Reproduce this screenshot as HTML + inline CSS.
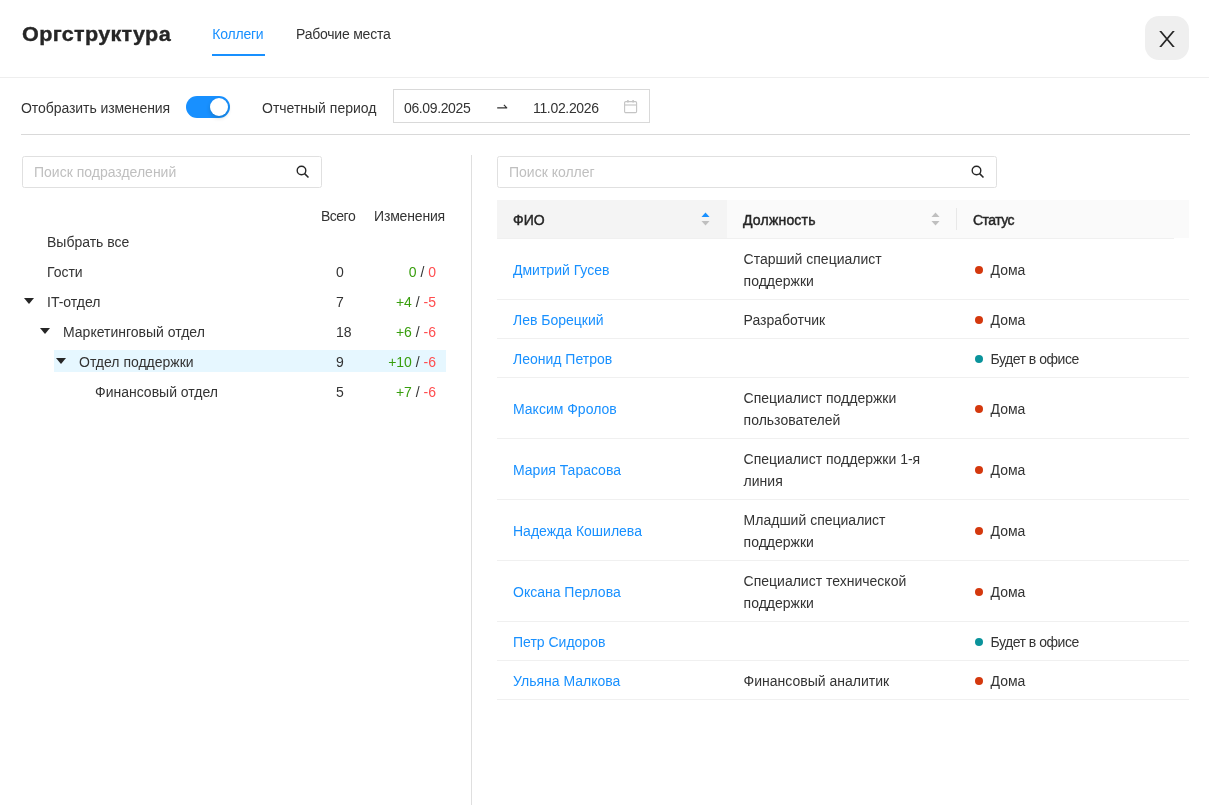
<!DOCTYPE html>
<html lang="ru">
<head>
<meta charset="utf-8">
<title>Оргструктура</title>
<style>
*{box-sizing:border-box;margin:0;padding:0}
html,body{width:1209px;height:805px;overflow:hidden;background:#fff}
body{font-family:"Liberation Sans",sans-serif;font-size:14px;color:#333;position:relative}
.abs{position:absolute;white-space:nowrap}
.t{line-height:22px}
#title{left:22.3px;top:19px;font-size:20px;line-height:30px;font-weight:bold;color:#262626;letter-spacing:0.3px;transform:scaleX(1.08);transform-origin:0 0;-webkit-text-stroke:0.35px #262626}
.tab{top:23px;letter-spacing:-0.22px}
#tab1{left:212.3px;color:#1890ff}
#tab1u{left:212px;top:54px;width:53px;height:2px;background:#1890ff}
#tab2{left:296px;color:#333}
#close{left:1145px;top:16px;width:44px;height:44px;border-radius:14px;background:#efefef}
#hline{left:0;top:77px;width:1209px;height:1px;background:#eeeeee}
#lbl1{left:21px;top:96.7px}
#toggle{left:185.5px;top:96.4px;width:44px;height:22px;border-radius:11px;background:#1890ff}
#knob{position:absolute;left:24px;top:2px;width:18px;height:18px;border-radius:50%;background:#fff;box-shadow:0 2px 4px rgba(0,35,11,.2)}
#lbl2{left:262px;top:96.7px}
#dates{left:392.5px;top:89px;width:257px;height:34px;border:1px solid #d9d9d9;border-radius:0}
#d1{left:404px;top:96.7px;letter-spacing:-0.37px}
#arr{left:496px;top:96px}
#d2{left:533px;top:96.7px;letter-spacing:-0.33px}
#line2{left:21px;top:134px;width:1169px;height:1px;background:#d9d9d9}
.search{height:32px;border:1px solid #e0e0e0;border-radius:2.5px;top:155.5px}
#s1{left:22px;width:300px}
#s2{left:497px;width:500px}
.ph{top:161px;color:#bfbfbf}
#vdiv{left:471px;top:155px;width:1px;height:650px;background:#dfdfdf}
.num{top:231px}
.green{color:#389e0d}
.red{color:#ff4d4f}
#hl{left:54px;top:350px;width:392px;height:22px;background:#e6f7ff}
.tri{width:0;height:0;border-left:5px solid transparent;border-right:5px solid transparent;border-top:6px solid #262626}
/* table */
#thead{left:497px;top:200px;width:692px;height:38px;background:#fafafa}
#thsort{left:497px;top:200px;width:230px;height:38px;background:#f4f4f4}
#thline{left:497px;top:238px;width:677px;height:1px;background:#f0f0f0}
.th{top:208.5px;font-weight:normal;color:#262626;-webkit-text-stroke:0.45px #262626}
.rowline{left:497px;width:692px;height:1px;background:#f0f0f0}
.name{color:#1890ff}
.dot{width:8px;height:8px;border-radius:50%}
.dh{background:#d4380d}
.do{background:#0a939b}
</style>
</head>
<body><div style="position:absolute;left:0;top:0;width:1209px;height:805px;will-change:transform">
<div id="title" class="abs">Оргструктура</div>
<div id="tab1" class="abs t tab">Коллеги</div>
<div id="tab1u" class="abs"></div>
<div id="tab2" class="abs t tab">Рабочие места</div>
<div id="close" class="abs">
  <svg width="44" height="44" viewBox="0 0 44 44" style="position:absolute;left:0;top:0"><path d="M14.2 15H16.4L29.8 31H27.6Z M27.6 15H29.8L16.4 31H14.2Z" fill="#262626"/></svg>
</div>
<div id="hline" class="abs"></div>

<div id="lbl1" class="abs t" style="letter-spacing:-0.07px">Отобразить изменения</div>
<div id="toggle" class="abs"><div id="knob"></div></div>
<div id="lbl2" class="abs t">Отчетный период</div>
<div id="dates" class="abs"></div>
<div id="d1" class="abs t">06.09.2025</div>
<svg class="abs" style="left:496px;top:103px" width="13" height="7" viewBox="0 0 13 7"><path d="M1.2 4.8H10.8L7.9 1.9" stroke="#333" stroke-width="1.2" fill="none" stroke-linejoin="round"/></svg>
<div id="d2" class="abs t">11.02.2026</div>
<svg class="abs" style="left:624px;top:100px" width="14" height="14" viewBox="0 0 14 14"><rect x="0.6" y="1.6" width="12" height="11" rx="1.2" fill="none" stroke="#c4c4c4" stroke-width="1.1"/><path d="M0.6 5H12.6" stroke="#c4c4c4" stroke-width="1.1" fill="none"/><path d="M3.9 0V2.6 M9.1 0V2.6" stroke="#c4c4c4" stroke-width="1.5" fill="none"/></svg>
<div id="line2" class="abs"></div>

<!-- left -->
<div id="s1" class="abs search"></div>
<div class="abs t ph" style="left:34px">Поиск подразделений</div>
<svg class="abs" style="left:296px;top:164.6px" width="14" height="14" viewBox="0 0 14 14"><circle cx="5.5" cy="5.5" r="4.3" fill="none" stroke="#262626" stroke-width="1.4"/><path d="M8.6 8.6L12.5 12.5" stroke="#262626" stroke-width="1.5"/></svg>
<div id="vdiv" class="abs"></div>

<div class="abs t" style="left:321px;top:205px;letter-spacing:-0.5px">Всего</div>
<div class="abs t" style="left:374px;top:205px;letter-spacing:-0.17px">Изменения</div>
<div id="hl" class="abs"></div>

<div class="abs t" style="left:47px;top:231px">Выбрать все</div>
<div class="abs t" style="left:47px;top:261px">Гости</div>
<div class="abs t" style="left:336px;top:261px">0</div>
<div class="abs t" style="right:773px;top:261px"><span class="green">0</span> / <span class="red">0</span></div>

<div class="abs tri" style="left:24px;top:298px"></div>
<div class="abs t" style="left:47px;top:291px">IT-отдел</div>
<div class="abs t" style="left:336px;top:291px">7</div>
<div class="abs t" style="right:773px;top:291px"><span class="green">+4</span> / <span class="red">-5</span></div>

<div class="abs tri" style="left:40px;top:328px"></div>
<div class="abs t" style="left:63px;top:321px">Маркетинговый отдел</div>
<div class="abs t" style="left:336px;top:321px">18</div>
<div class="abs t" style="right:773px;top:321px"><span class="green">+6</span> / <span class="red">-6</span></div>

<div class="abs tri" style="left:56px;top:358px"></div>
<div class="abs t" style="left:79px;top:351px">Отдел поддержки</div>
<div class="abs t" style="left:336px;top:351px">9</div>
<div class="abs t" style="right:773px;top:351px"><span class="green">+10</span> / <span class="red">-6</span></div>

<div class="abs t" style="left:95px;top:381px">Финансовый отдел</div>
<div class="abs t" style="left:336px;top:381px">5</div>
<div class="abs t" style="right:773px;top:381px"><span class="green">+7</span> / <span class="red">-6</span></div>

<!-- right -->
<div id="s2" class="abs search"></div>
<div class="abs t ph" style="left:509px">Поиск коллег</div>
<svg class="abs" style="left:971px;top:164.6px" width="14" height="14" viewBox="0 0 14 14"><circle cx="5.5" cy="5.5" r="4.3" fill="none" stroke="#262626" stroke-width="1.4"/><path d="M8.6 8.6L12.5 12.5" stroke="#262626" stroke-width="1.5"/></svg>

<div id="thead" class="abs"></div>
<div id="thsort" class="abs"></div>
<div id="thline" class="abs"></div>
<div class="abs t th" style="left:513px;letter-spacing:0px">ФИО</div>
<div class="abs t th" style="left:743px;letter-spacing:0.2px">Должность</div>
<div class="abs t th" style="left:973px;letter-spacing:-0.55px">Статус</div>
<div class="abs" style="left:956px;top:208px;width:1px;height:22px;background:#e8e8e8"></div>
<svg class="abs" style="left:701px;top:212.4px" width="9" height="14" viewBox="0 0 9 14"><path d="M4.5 0.5L8.5 5H0.5Z" fill="#1890ff"/><path d="M4.5 13.5L8.5 9H0.5Z" fill="#bfbfbf"/></svg>
<svg class="abs" style="left:931px;top:212.4px" width="9" height="14" viewBox="0 0 9 14"><path d="M4.5 0.5L8.5 5H0.5Z" fill="#bfbfbf"/><path d="M4.5 13.5L8.5 9H0.5Z" fill="#bfbfbf"/></svg>

<div id="rows">
<div class="abs t name" style="left:513px;top:259px">Дмитрий Гусев</div>
<div class="abs t" style="left:743.6px;top:248px">Старший специалист</div>
<div class="abs t" style="left:743.6px;top:270px">поддержки</div>
<div class="abs dot dh" style="left:974.5px;top:266px"></div>
<div class="abs t" style="left:990.5px;top:259px">Дома</div>
<div class="abs rowline" style="top:299px"></div>
<div class="abs t name" style="left:513px;top:309px">Лев Борецкий</div>
<div class="abs t" style="left:743.6px;top:309px">Разработчик</div>
<div class="abs dot dh" style="left:974.5px;top:316px"></div>
<div class="abs t" style="left:990.5px;top:309px">Дома</div>
<div class="abs rowline" style="top:338px"></div>
<div class="abs t name" style="left:513px;top:348px">Леонид Петров</div>
<div class="abs dot do" style="left:974.5px;top:355px"></div>
<div class="abs t" style="left:990.5px;top:348px;letter-spacing:-0.48px">Будет в офисе</div>
<div class="abs rowline" style="top:377px"></div>
<div class="abs t name" style="left:513px;top:398px">Максим Фролов</div>
<div class="abs t" style="left:743.6px;top:387px">Специалист поддержки</div>
<div class="abs t" style="left:743.6px;top:409px">пользователей</div>
<div class="abs dot dh" style="left:974.5px;top:405px"></div>
<div class="abs t" style="left:990.5px;top:398px">Дома</div>
<div class="abs rowline" style="top:438px"></div>
<div class="abs t name" style="left:513px;top:459px">Мария Тарасова</div>
<div class="abs t" style="left:743.6px;top:448px">Специалист поддержки 1-я</div>
<div class="abs t" style="left:743.6px;top:470px">линия</div>
<div class="abs dot dh" style="left:974.5px;top:466px"></div>
<div class="abs t" style="left:990.5px;top:459px">Дома</div>
<div class="abs rowline" style="top:499px"></div>
<div class="abs t name" style="left:513px;top:520px">Надежда Кошилева</div>
<div class="abs t" style="left:743.6px;top:509px">Младший специалист</div>
<div class="abs t" style="left:743.6px;top:531px">поддержки</div>
<div class="abs dot dh" style="left:974.5px;top:527px"></div>
<div class="abs t" style="left:990.5px;top:520px">Дома</div>
<div class="abs rowline" style="top:560px"></div>
<div class="abs t name" style="left:513px;top:581px">Оксана Перлова</div>
<div class="abs t" style="left:743.6px;top:570px">Специалист технической</div>
<div class="abs t" style="left:743.6px;top:592px">поддержки</div>
<div class="abs dot dh" style="left:974.5px;top:588px"></div>
<div class="abs t" style="left:990.5px;top:581px">Дома</div>
<div class="abs rowline" style="top:621px"></div>
<div class="abs t name" style="left:513px;top:631px">Петр Сидоров</div>
<div class="abs dot do" style="left:974.5px;top:638px"></div>
<div class="abs t" style="left:990.5px;top:631px;letter-spacing:-0.48px">Будет в офисе</div>
<div class="abs rowline" style="top:660px"></div>
<div class="abs t name" style="left:513px;top:670px">Ульяна Малкова</div>
<div class="abs t" style="left:743.6px;top:670px">Финансовый аналитик</div>
<div class="abs dot dh" style="left:974.5px;top:677px"></div>
<div class="abs t" style="left:990.5px;top:670px">Дома</div>
<div class="abs rowline" style="top:699px"></div>
</div>
</div></body>
</html>
